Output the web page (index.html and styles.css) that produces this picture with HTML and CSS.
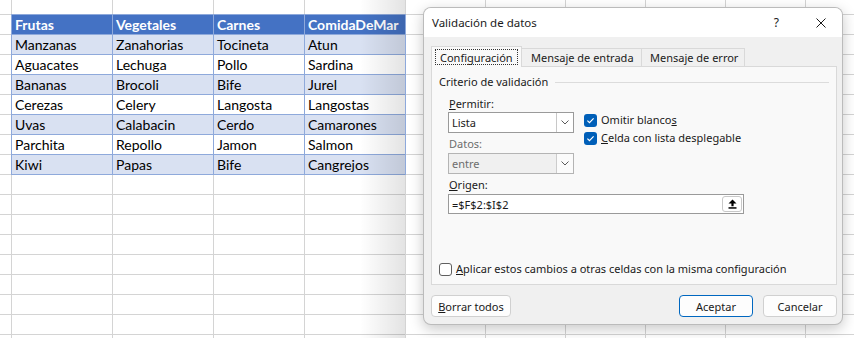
FILE: index.html
```html
<!DOCTYPE html>
<html lang="es">
<head>
<meta charset="utf-8">
<title>Validación de datos</title>
<link rel="stylesheet" href="styles.css">
</head>
<body>
<div class="sheet">
  <div class="xtable">
    <div class="row head"><div class="cell">Frutas</div><div class="cell">Vegetales</div><div class="cell">Carnes</div><div class="cell">ComidaDeMar</div></div>
    <div class="row band"><div class="cell">Manzanas</div><div class="cell">Zanahorias</div><div class="cell">Tocineta</div><div class="cell">Atun</div></div>
    <div class="row"><div class="cell">Aguacates</div><div class="cell">Lechuga</div><div class="cell">Pollo</div><div class="cell">Sardina</div></div>
    <div class="row band"><div class="cell">Bananas</div><div class="cell">Brocoli</div><div class="cell">Bife</div><div class="cell">Jurel</div></div>
    <div class="row"><div class="cell">Cerezas</div><div class="cell">Celery</div><div class="cell">Langosta</div><div class="cell">Langostas</div></div>
    <div class="row band"><div class="cell">Uvas</div><div class="cell">Calabacin</div><div class="cell">Cerdo</div><div class="cell">Camarones</div></div>
    <div class="row"><div class="cell">Parchita</div><div class="cell">Repollo</div><div class="cell">Jamon</div><div class="cell">Salmon</div></div>
    <div class="row band"><div class="cell">Kiwi</div><div class="cell">Papas</div><div class="cell">Bife</div><div class="cell">Cangrejos</div></div>
  </div>
  <div class="shade"></div>
</div>

<div class="dialog">
  <div class="titlebar">
    <span class="title">Validación de datos</span>
    <span class="help">?</span>
    <span class="close"><svg width="10" height="10" viewBox="0 0 10 10"><path d="M0.5 0.5 L9.5 9.5 M9.5 0.5 L0.5 9.5" stroke="#1a1a1a" stroke-width="1" fill="none"/></svg></span>
  </div>

  <div class="tabs">
    <div class="tab active"><span class="focus">Configuración</span></div>
    <div class="tab tab-entry">Mensaje de entrada</div>
    <div class="tab tab-error">Mensaje de error</div>
  </div>

  <div class="panel">
    <div class="group-title"><span>Criterio de validación</span><span class="rule"></span></div>

    <div class="fields">
      <div class="col-left">
        <div class="label"><u>P</u>ermitir:</div>
        <div class="select"><span class="value">Lista</span><span class="drop"><svg width="8" height="5" viewBox="0 0 8 5"><path d="M0.5 0.5 L4 4 L7.5 0.5" stroke="#5a5a5a" stroke-width="1" fill="none"/></svg></span></div>
        <div class="label disabled">Datos:</div>
        <div class="select disabled"><span class="value">entre</span><span class="drop"><svg width="8" height="5" viewBox="0 0 8 5"><path d="M0.5 0.5 L4 4 L7.5 0.5" stroke="#5a5a5a" stroke-width="1" fill="none"/></svg></span></div>
      </div>
      <div class="col-right">
        <div class="check"><span class="box checked"><svg width="13" height="13" viewBox="0 0 13 13"><path d="M3.4 6.6 L5.5 8.7 L9.6 4.4" stroke="#fff" stroke-width="1.2" fill="none"/></svg></span>Omitir blanco<u>s</u></div>
        <div class="check"><span class="box checked"><svg width="13" height="13" viewBox="0 0 13 13"><path d="M3.4 6.6 L5.5 8.7 L9.6 4.4" stroke="#fff" stroke-width="1.2" fill="none"/></svg></span><u>C</u>elda con lista desplegable</div>
      </div>
    </div>

    <div class="label origin-label"><u>O</u>rigen:</div>
    <div class="input"><span class="value">=$F$2:$I$2</span><span class="refbtn"><svg width="9" height="10" viewBox="0 0 9 10"><path d="M4.5 0.5 L8.5 4.6 L5.6 4.6 L5.6 7.2 L3.4 7.2 L3.4 4.6 L0.5 4.6 Z" fill="#000"/><rect x="0.5" y="8.2" width="8" height="1.5" fill="#000"/></svg></span></div>

    <div class="check apply"><span class="box"></span><u>A</u>plicar estos cambios a otras celdas con la misma configuración</div>
  </div>

  <div class="buttons">
    <button class="btn"><u>B</u>orrar todos</button>
    <span class="grow"></span>
    <button class="btn primary">Aceptar</button>
    <button class="btn">Cancelar</button>
  </div>
</div>
</body>
</html>
```

FILE: styles.css
```css
* { box-sizing: border-box; }

html, body {
  margin: 0;
  padding: 0;
}

body {
  width: 854px;
  height: 338px;
  overflow: hidden;
  position: relative;
  background: #fff;
  font-family: "Noto Sans", "Open Sans", sans-serif;
}

/* ---------- spreadsheet ---------- */
.sheet {
  position: relative;
  height: 338px;
  padding: 14px 0 0 11px;
  background-color: #fff;
  background-image:
    linear-gradient(#d4d4d4, #d4d4d4),
    linear-gradient(#d4d4d4, #d4d4d4),
    linear-gradient(#d4d4d4, #d4d4d4),
    linear-gradient(#d4d4d4, #d4d4d4),
    linear-gradient(#d4d4d4, #d4d4d4),
    linear-gradient(#d4d4d4, #d4d4d4),
    linear-gradient(#d4d4d4, #d4d4d4),
    linear-gradient(#d4d4d4, #d4d4d4),
    linear-gradient(#d4d4d4, #d4d4d4),
    linear-gradient(#d4d4d4, #d4d4d4),
    linear-gradient(to bottom, transparent 19px, #d4d4d4 19px);
  background-size:
    1px 100%, 1px 100%, 1px 100%, 1px 100%, 1px 100%,
    1px 100%, 1px 100%, 1px 100%, 1px 100%, 1px 100%,
    100% 20px;
  background-position:
    11px 0, 112px 0, 213px 0, 304px 0, 405px 0,
    485px 0, 565px 0, 645px 0, 725px 0, 805px 0,
    0 -5px;
  background-repeat:
    no-repeat, no-repeat, no-repeat, no-repeat, no-repeat,
    no-repeat, no-repeat, no-repeat, no-repeat, no-repeat,
    repeat-y;
}

.xtable {
  display: grid;
  grid-template-columns: 101px 101px 91px 101px;
  width: 395px;
  border-left: 1px solid #8ea9db;
  border-top: 1px solid #8ea9db;
  font-family: "Lato", "Liberation Sans", sans-serif;
  font-size: 14px;
  color: #000;
}

.row { display: contents; }

.cell {
  height: 20px;
  line-height: 19px;
  padding-left: 3px;
  border-right: 1px solid #8ea9db;
  border-bottom: 1px solid #8ea9db;
  background: #fff;
  white-space: nowrap;
  overflow: hidden;
}

.band .cell { background: #d9e1f2; }

.head .cell {
  background: #4472c4;
  color: #fff;
  font-weight: bold;
}

.shade {
  position: absolute;
  left: 360px;
  top: 0;
  width: 45px;
  height: 338px;
  background: linear-gradient(to right, rgba(0,0,0,0), rgba(0,0,0,0.11));
  pointer-events: none;
}

/* ---------- dialog ---------- */
.dialog {
  position: absolute;
  left: 423px;
  top: 7px;
  width: 420px;
  height: 318px;
  display: flex;
  flex-direction: column;
  background: #f0f0f0;
  border: 1px solid rgba(0,0,0,0.22);
  border-radius: 8px;
  box-shadow: 0 4px 14px rgba(0,0,0,0.22);
  overflow: hidden;
  font-size: 11px;
  color: #1a1a1a;
}

.titlebar {
  height: 29px;
  flex: none;
  display: flex;
  align-items: center;
  padding-left: 8px;
  background: #fff;
  font-size: 11.5px;
}

.title { flex: 1; }

.help {
  margin-right: 37px;
  font-size: 12px;
}

.close {
  display: flex;
  margin-right: 16px;
}

/* tabs */
.tabs {
  display: flex;
  align-items: flex-end;
  height: 20px;
  margin: 9px 0 0 7px;
  position: relative;
  z-index: 1;
}

.tab {
  height: 18px;
  line-height: 17px;
  padding: 0 0 0 9px;
  border: 1px solid #d9d9d9;
  border-bottom: none;
  margin-left: -1px;
  background: #f0f0f0;
  white-space: nowrap;
  overflow: hidden;
}

.tab-entry { width: 121px; }
.tab-error { width: 104px; padding-left: 8px; }

.tab.active {
  width: 91px;
  height: 21px;
  margin-left: 0;
  margin-bottom: -1px;
  padding: 2px 3px 0 3px;
  background: #f9f9f9;
  line-height: 15px;
}

.focus {
  display: block;
  height: 16px;
  padding: 0 4px;
  border: 1px dotted #333;
}

/* panel */
.panel {
  display: flex;
  flex-direction: column;
  width: 406px;
  height: 219px;
  margin-left: 7px;
  padding: 7px 7px 6px 7px;
  background: #f9f9f9;
  border: 1px solid #d9d9d9;
}

.group-title {
  display: flex;
  align-items: center;
  height: 16px;
  line-height: 16px;
}

.rule {
  flex: 1;
  height: 1px;
  margin-left: 7px;
  background: #dcdcdc;
}

.fields {
  display: flex;
  gap: 10px;
  margin-left: 9px;
  margin-top: 6px;
}

.col-left {
  display: flex;
  flex-direction: column;
  width: 126px;
}

.label {
  height: 16px;
  line-height: 16px;
  padding-left: 1px;
}

.label.disabled {
  margin-top: 3px;
  color: #6d6d6d;
}

.select {
  display: flex;
  height: 21px;
  border: 1px solid #9a9a9a;
  background: #fff;
}

.select .value {
  flex: 1;
  line-height: 19px;
  padding-left: 3px;
}

.select .drop {
  width: 17px;
  display: flex;
  align-items: center;
  justify-content: center;
  border-left: 1px solid #c8c8c8;
  background: #fff;
}

.select.disabled {
  margin-top: 1px;
  background: #f0f0f0;
  border-color: #b4b4b4;
  color: #6d6d6d;
}

.select.disabled .drop {
  background: #fbfbfb;
  border-left-color: #cccccc;
}

.col-right {
  display: flex;
  flex-direction: column;
  margin-top: 15px;
}

.check {
  display: flex;
  align-items: center;
  height: 18px;
  line-height: 18px;
}

.box {
  flex: none;
  width: 13px;
  height: 13px;
  margin-right: 4px;
  border: 1px solid #5f5f5f;
  border-radius: 3px;
  background: #fff;
}

.box.checked {
  border: none;
  background: #005fb8;
}

.box svg { display: block; }

.origin-label {
  margin-top: 3px;
  margin-left: 9px;
}

.input {
  display: flex;
  align-items: center;
  width: 296px;
  height: 20px;
  margin-left: 9px;
  margin-top: 1px;
  padding-right: 1px;
  border: 1px solid #9a9a9a;
  background: #fff;
}

.input .value {
  flex: 1;
  padding-left: 3px;
}

.refbtn {
  display: flex;
  align-items: center;
  justify-content: center;
  width: 20px;
  height: 16px;
  border: 1px solid #c8c8c8;
  border-radius: 3px;
  background: #fff;
}

.apply {
  margin-top: auto;
}

/* buttons */
.buttons {
  display: flex;
  gap: 10px;
  margin: 10px 5px 0 7px;
}

.grow { flex: 1; }

.btn {
  height: 22px;
  padding: 0;
  font-family: inherit;
  font-size: 11px;
  color: #1a1a1a;
  background: #fdfdfd;
  border: 1px solid #d0d0d0;
  border-radius: 4px;
  width: 74px;
}

.btn:first-child { width: 80px; }

.btn.primary {
  border-color: #0067c0;
}
```
